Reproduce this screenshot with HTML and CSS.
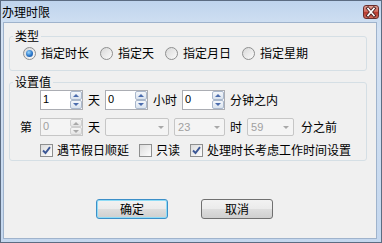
FILE: index.html
```html
<!DOCTYPE html>
<html lang="zh-CN">
<head>
    <meta charset="UTF-8">
    <title>办理时限</title>
    <link rel="stylesheet" href="styles.css">
</head>
<body>
    <div class="window">
        <div class="titlebar">
            <span class="title">办理时限</span>
            <span class="close">
                <svg width="16" height="14" viewBox="0 0 16 14">
                    <path d="M5 3.5 L11 10.5 M11 3.5 L5 10.5" stroke="#4a2020" stroke-width="3.4" stroke-linecap="square"/>
                    <path d="M5 3.5 L11 10.5 M11 3.5 L5 10.5" stroke="#ffffff" stroke-width="1.6" stroke-linecap="square"/>
                </svg>
            </span>
        </div>

        <div class="client">
            <fieldset class="group group-type">
                <legend>类型</legend>
                <div class="radio-row">
                    <label class="opt"><span class="radio on"></span>指定时长</label>
                    <label class="opt"><span class="radio"></span>指定天</label>
                    <label class="opt"><span class="radio"></span>指定月日</label>
                    <label class="opt"><span class="radio"></span>指定星期</label>
                </div>
            </fieldset>

            <fieldset class="group group-value">
                <legend>设置值</legend>

                <!-- 时长: x天 x小时 x分钟之内 -->
                <div class="row row-within">
                    <span class="spin">
                        <span class="spin-text">1</span>
                        <span class="spin-btns"><span class="up"></span><span class="down"></span></span>
                    </span>
                    <span>天</span>
                    <span class="spin">
                        <span class="spin-text">0</span>
                        <span class="spin-btns"><span class="up"></span><span class="down"></span></span>
                    </span>
                    <span>小时</span>
                    <span class="spin">
                        <span class="spin-text">0</span>
                        <span class="spin-btns"><span class="up"></span><span class="down"></span></span>
                    </span>
                    <span>分钟之内</span>
                </div>

                <!-- 第x天 xx时xx分之前 (禁用) -->
                <div class="row row-before">
                    <span>第</span>
                    <span class="spin spin-first disabled">
                        <span class="spin-text">0</span>
                        <span class="spin-btns"><span class="up"></span><span class="down"></span></span>
                    </span>
                    <span>天</span>
                    <span class="combo combo-day"><span class="combo-text"></span><span class="arrow"></span></span>
                    <span class="combo combo-hour"><span class="combo-text">23</span><span class="arrow"></span></span>
                    <span>时</span>
                    <span class="combo combo-min"><span class="combo-text">59</span><span class="arrow"></span></span>
                    <span class="before">分之前</span>
                </div>

                <div class="row row-checks">
                    <label class="chk">
                        <span class="check"><svg width="9" height="9" viewBox="0 0 9 9"><path d="M1 4.5 L3.5 7 L8 1.2" fill="none" stroke="#3b5795" stroke-width="1.9"/></svg></span>遇节假日顺延
                    </label>
                    <label class="chk"><span class="check"></span>只读</label>
                    <label class="chk">
                        <span class="check"><svg width="9" height="9" viewBox="0 0 9 9"><path d="M1 4.5 L3.5 7 L8 1.2" fill="none" stroke="#3b5795" stroke-width="1.9"/></svg></span>处理时长考虑工作时间设置
                    </label>
                </div>
            </fieldset>

            <div class="buttons">
                <button class="btn btn-default">确定</button>
                <button class="btn">取消</button>
            </div>
        </div>
    </div>
</body>
</html>
```

FILE: styles.css
```css
* {
    box-sizing: border-box;
}
body {
    margin: 0;
    font-family: "Noto Sans CJK SC", "Liberation Sans", sans-serif;
    font-size: 12px;
    line-height: 14px;
    color: #000;
}
.window {
    width: 382px;
    height: 243px;
    border: 1px solid #5c6c82;
    background: linear-gradient(#bfd4ed, #d4e2f3 30px, #c4d7ee);
    display: flex;
    flex-direction: column;
}
.titlebar {
    height: 21px;
    display: flex;
    align-items: center;
    justify-content: space-between;
    padding: 0 2px 0 1px;
}
.title {
    font-size: 12px;
}
.close {
    width: 16px;
    height: 14px;
    border: 1px solid #6b2e2b;
    border-radius: 3px;
    background: linear-gradient(#e2a196, #cf6a5e 45%, #b8392e 55%, #cd6b5c);
    display: flex;
    align-items: center;
    justify-content: center;
}
.close svg {
    display: block;
    margin: -1px;
}
.client {
    flex: 1;
    margin: 0 4px 3px 2px;
    border: 1px solid #9fb3cc;
    background: #f0f0f0;
    display: flex;
    flex-direction: column;
}
.group {
    margin: 0 9px 0 5px;
    padding: 0;
    border: 1px solid #d5dfe5;
    border-radius: 3px;
    min-width: 0;
}
.group legend {
    margin-left: 3px;
    padding: 0 2px;
    line-height: 14px;
}
.group-type {
    margin-top: 6px;
    padding-bottom: 10px;
}
.group-value {
    margin-top: 4px;
    padding-bottom: 3px;
}

/* 类型 */
.radio-row {
    display: flex;
    margin: 3px 0 0 13px;
}
.opt {
    display: flex;
    align-items: center;
    margin-right: 11px;
}
.radio {
    width: 13px;
    height: 13px;
    border: 1px solid #8e8f8f;
    border-radius: 50%;
    background: linear-gradient(135deg, #d8d8d8, #fbfbfb);
    display: flex;
    align-items: center;
    justify-content: center;
    margin-right: 5px;
}
.radio.on::after {
    content: "";
    width: 7px;
    height: 7px;
    border-radius: 50%;
    background: radial-gradient(circle at 40% 35%, #9ad8ff, #2b76c8 55%, #114a95);
}

/* 设置值 */
.row {
    display: flex;
    align-items: center;
    gap: 5px;
}
.row-within {
    margin: 1px 0 0 30px;
}
.row-before {
    margin: 8px 0 0 10px;
}
.row-checks {
    margin: 7px 0 0 30px;
    gap: 10px;
}
.spin {
    width: 43px;
    height: 20px;
    border: 1px solid #abadb3;
    background: #fff;
    display: flex;
}
.spin-text {
    flex: 1;
    padding: 2px 0 0 2px;
    font-family: "Liberation Sans", sans-serif;
    font-size: 11px;
    line-height: 13px;
}
.spin-btns {
    width: 12px;
    display: flex;
    flex-direction: column;
}
.spin-btns span {
    flex: 1;
    border: 1px solid #aab8cc;
    border-radius: 2px;
    background: linear-gradient(#f4f7fb, #dae3ee);
    display: flex;
    align-items: center;
    justify-content: center;
}
.spin-btns .up::after {
    content: "";
    border: 3px solid transparent;
    border-bottom: 3px solid #4b6cad;
    border-top: 0;
}
.spin-btns .down::after {
    content: "";
    border: 3px solid transparent;
    border-top: 3px solid #4b6cad;
    border-bottom: 0;
}
.spin-first {
    margin-left: 3px;
}
.spin.disabled {
    height: 18px;
    border-color: #c6c6c6;
    background: #f4f4f4;
    color: #a0a0a0;
}
.spin.disabled .spin-text {
    padding-top: 1px;
}
.spin.disabled .spin-btns span {
    border-color: #cfcfcf;
    background: linear-gradient(#f6f6f6, #e4e4e4);
}
.spin.disabled .up::after {
    border-bottom-color: #a8a8a8;
}
.spin.disabled .down::after {
    border-top-color: #a8a8a8;
}
.combo {
    height: 18px;
    border: 1px solid #c6c6c6;
    border-radius: 2px;
    background: #f4f4f4;
    color: #a0a0a0;
    display: flex;
    align-items: center;
    justify-content: space-between;
    padding: 0 3px 0 3px;
    font-family: "Liberation Sans", sans-serif;
    font-size: 11px;
}
.combo .arrow {
    border: 3px solid transparent;
    border-top: 3px solid #a8a8a8;
    border-bottom: 0;
    margin-right: 1px;
}
.combo-day {
    width: 64px;
}
.combo-hour {
    width: 51px;
}
.combo-min {
    width: 47px;
}
.before {
    margin-left: 2px;
}
.chk {
    display: flex;
    align-items: center;
}
.check {
    width: 13px;
    height: 13px;
    border: 1px solid #8e8f8f;
    background: linear-gradient(135deg, #dcdcdc, #fdfdfd);
    display: flex;
    align-items: center;
    justify-content: center;
    margin-right: 4px;
}
.check svg {
    display: block;
}

/* 按钮 */
.buttons {
    display: flex;
    gap: 33px;
    margin-top: 38px;
    padding-left: 92px;
}
.btn {
    width: 72px;
    height: 20px;
    padding: 0;
    border: 1px solid #707070;
    border-radius: 3px;
    background: linear-gradient(#f2f2f2, #ebebeb 48%, #dddddd 52%, #cfcfcf);
    font-family: "Noto Sans CJK SC", sans-serif;
    font-size: 12px;
    line-height: 14px;
    color: #000;
}
.btn-default {
    border-color: #3c8fc8;
    box-shadow: inset 0 0 0 1px #8fdcf6;
}
```
